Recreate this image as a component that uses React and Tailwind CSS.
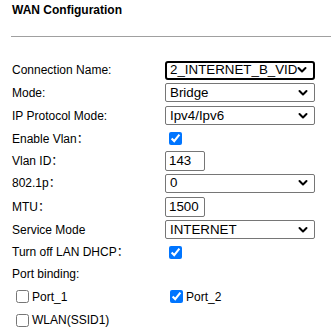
import React from 'react';

const Chevron = () => (
    <svg className="absolute right-[6px] top-1/2 -translate-y-1/2" width="10" height="7" viewBox="0 0 10 7" fill="none">
        <path d="M1.5 1.5l3.5 3.5 3.5-3.5" stroke="#000" strokeWidth="2" strokeLinecap="round" strokeLinejoin="round" />
    </svg>
);

const Select = ({ value, focused }) => (
    <div
        className={
            focused
                ? 'relative w-[150px] h-[19px] border-2 border-black rounded-[3px] pl-[3px] pr-[18px] flex items-center overflow-hidden'
                : 'relative w-[150px] h-[19px] border border-[#767676] rounded-[2px] pl-[4px] pr-[18px] flex items-center overflow-hidden'
        }
    >
        <span className="text-[13.33px] leading-none whitespace-nowrap text-black">{value}</span>
        <Chevron />
    </div>
);

const TextBox = ({ value }) => (
    <div className="w-[40px] h-[20px] border border-[#767676] rounded-[2px] pl-[3px] flex items-center">
        <span className="text-[13.33px] leading-none text-black">{value}</span>
    </div>
);

const Check = ({ checked }) => (
    <input
        type="checkbox"
        defaultChecked={checked}
        className="w-[13px] h-[13px] ml-[4px] mr-[3px] accent-[#0075ff]"
    />
);

const Row = ({ h, label, children }) => (
    <div className={`flex items-center ${h}`}>
        <div className="w-[153px] text-[12px] text-black">{label}</div>
        <div className="flex items-center">{children}</div>
    </div>
);

export default function App() {
    return (
        <div
            className="w-[331px] h-[335px] bg-white overflow-hidden"
            style={{ fontFamily: '"Liberation Sans", Arial, "Noto Sans CJK SC", sans-serif' }}
        >
            <div className="pl-[12px] pt-[3px] h-[36px]">
                <h1 className="text-[12px] font-bold text-black leading-[14px]">WAN Configuration</h1>
            </div>
            <div className="ml-[11px] h-px bg-[#a0a0a0]" />

            <div className="pl-[12px] pt-[22px]">
                <Row h="h-[22px]" label="Connection Name:">
                    <Select value="2_INTERNET_B_VID" focused />
                </Row>
                <Row h="h-[23px]" label="Mode:">
                    <Select value="Bridge" />
                </Row>
                <Row h="h-[23px]" label="IP Protocol Mode:">
                    <Select value="Ipv4/Ipv6" />
                </Row>
                <Row h="h-[23px]" label="Enable Vlan：">
                    <Check checked />
                </Row>
                <Row h="h-[21px]" label="Vlan ID：">
                    <TextBox value="143" />
                </Row>
                <Row h="h-[24px]" label="802.1p：">
                    <Select value="0" />
                </Row>
                <Row h="h-[23px]" label="MTU：">
                    <TextBox value="1500" />
                </Row>
                <Row h="h-[23px]" label="Service Mode">
                    <Select value="INTERNET" />
                </Row>
                <Row h="h-[22px]" label="Turn off LAN DHCP：">
                    <Check checked />
                </Row>
                <div className="h-[22px] flex items-center text-[12px] text-black">Port binding:</div>
                <div className="h-[23px] flex items-center text-[12px] text-black">
                    <label className="w-[154px] flex items-center">
                        <Check />
                        <span>Port_1</span>
                    </label>
                    <label className="flex items-center">
                        <Check checked />
                        <span>Port_2</span>
                    </label>
                </div>
                <div className="h-[24px] flex items-center text-[12px] text-black">
                    <label className="flex items-center">
                        <Check />
                        <span>WLAN(SSID1)</span>
                    </label>
                </div>
            </div>
        </div>
    );
}
